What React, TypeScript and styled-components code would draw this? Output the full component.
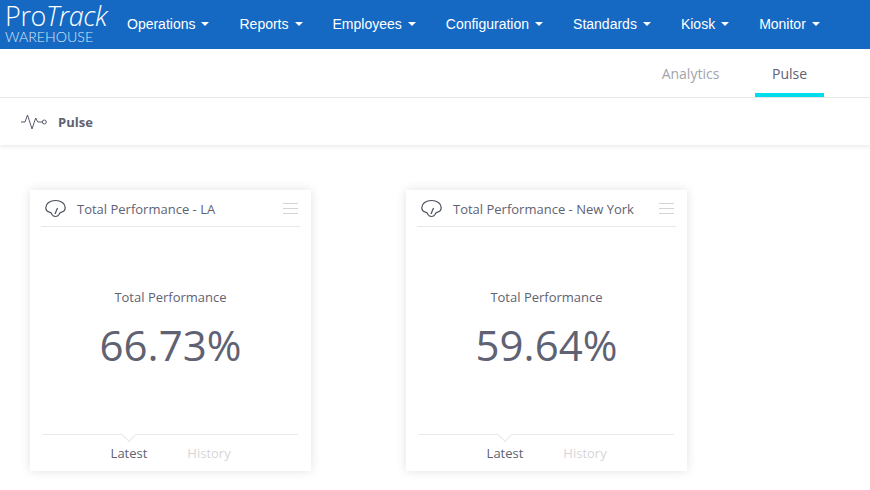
import React from 'react';
import styled, { createGlobalStyle } from 'styled-components';

const menuItems = ['Operations', 'Reports', 'Employees', 'Configuration', 'Standards', 'Kiosk', 'Monitor'];

const cards = [
  { title: 'Total Performance - LA', value: '66.73%' },
  { title: 'Total Performance - New York', value: '59.64%' },
];

function App() {
  return (
    <>
      <GlobalStyle />
      <Navbar>
        <Logo>
          <LogoMain>Pro<em>Track</em></LogoMain>
          <LogoSub>WAREHOUSE</LogoSub>
        </Logo>
        <Menu>
          {menuItems.map((item) => (
            <MenuItem key={item}>
              {item}
              <Caret />
            </MenuItem>
          ))}
        </Menu>
      </Navbar>

      <TabBar>
        <Tab>Analytics</Tab>
        <Tab $active>Pulse</Tab>
      </TabBar>

      <TitleBar>
        <svg width="28" height="16" viewBox="0 0 28 16" fill="none" stroke="#55596a" strokeWidth="1">
          <path d="M0 8H4L6.5 1L11 15L14.7 4L16.7 8H21" />
          <circle cx="23.3" cy="8" r="2" />
        </svg>
        <PageTitle>Pulse</PageTitle>
      </TitleBar>

      <CardGrid>
        {cards.map((card) => (
          <Card key={card.title}>
            <CardHeader>
              <svg width="22" height="19" viewBox="0 0 22 19" fill="none" stroke="#4a4d5c" strokeWidth="1.2">
                <path d="M4.5 13.2C2.2 12.6 0.8 11 0.8 8.5C0.8 4.5 5 1.5 10.5 1.5C16 1.5 20.2 4.5 20.2 8.5C20.2 11 18.8 12.6 16.5 13.2C15 13.4 14.6 14 14 15.5C13.2 17 12 17.5 10.5 17.5C9 17.5 7.8 17 7 15.5C6.4 14 6 13.4 4.5 13.2Z" />
                <path d="M10 15L12.5 9" />
              </svg>
              <CardTitle>{card.title}</CardTitle>
              <Burger>
                <span />
                <span />
                <span />
              </Burger>
            </CardHeader>
            <CardBody>
              <MetricLabel>Total Performance</MetricLabel>
              <MetricValue>{card.value}</MetricValue>
            </CardBody>
            <CardFooter>
              <FooterTab $active>Latest</FooterTab>
              <FooterTab>History</FooterTab>
            </CardFooter>
          </Card>
        ))}
      </CardGrid>
    </>
  );
}

export default App;

const GlobalStyle = createGlobalStyle`
  html, body {
    margin: 0;
    padding: 0;
    background: #fff;
  }

  body {
    min-height: 490px;
    font-family: "Open Sans", "Liberation Sans", sans-serif;
  }
`

const Navbar = styled.nav`
  display: flex;
  height: 49px;
  background-color: #1569c3;
  color: #fff;
`

const Logo = styled.div`
  display: flex;
  flex-direction: column;
  width: 112px;
  padding: 2px 0 0 5px;
  box-sizing: border-box;
  font-weight: 300;
`

const LogoMain = styled.div`
  font-family: "Open Sans", sans-serif;
  font-size: 27px;
  line-height: 27px;
  letter-spacing: -0.4px;
  white-space: nowrap;

  em {
    font-style: italic;
  }
`

const LogoSub = styled.div`
  margin-top: 1px;
  font-family: "Lato", sans-serif;
  font-size: 14.2px;
  line-height: 14px;
  color: #dbe8f6;
`

const Menu = styled.div`
  display: flex;
`

const MenuItem = styled.a`
  display: flex;
  align-items: center;
  height: 47px;
  padding: 0 15px 2px;
  font-family: "Liberation Sans", Arial, sans-serif;
  font-size: 14px;
  color: #fff;
  white-space: nowrap;
`

const Caret = styled.span`
  margin-left: 6px;
  margin-top: 1px;
  border-top: 4px solid #fff;
  border-left: 4px solid transparent;
  border-right: 4px solid transparent;
`

const TabBar = styled.div`
  display: flex;
  justify-content: flex-end;
  height: 48px;
  padding-right: 46px;
  border-bottom: 1px solid #e8e8e8;
`

const Tab = styled.a<{ $active?: boolean }>`
  display: flex;
  justify-content: center;
  align-items: center;
  box-sizing: border-box;
  width: ${(p) => (p.$active ? '69px' : '93px')};
  margin-left: ${(p) => (p.$active ? '18px' : '0')};
  height: 48px;
  padding-top: 4px;
  font-size: 14px;
  color: ${(p) => (p.$active ? '#5f6272' : '#a2a3ab')};
  border-bottom: 4px solid ${(p) => (p.$active ? '#00dcec' : 'transparent')};
`

const TitleBar = styled.div`
  display: flex;
  align-items: center;
  gap: 9px;
  height: 47px;
  padding-left: 21px;
  box-shadow: 0 2px 4px rgba(0, 0, 0, 0.08);
`

const PageTitle = styled.h1`
  margin: 0;
  font-size: 13px;
  font-weight: 700;
  color: #5f6272;
`

const CardGrid = styled.div`
  display: flex;
  gap: 95px;
  padding: 45px 0 0 30px;
`

const Card = styled.section`
  display: flex;
  flex-direction: column;
  width: 281px;
  height: 281px;
  box-shadow: 0 0 10px rgba(0, 0, 0, 0.12);
`

const CardHeader = styled.header`
  display: flex;
  align-items: center;
  height: 36px;
  margin: 0 11px;
  padding: 0 4px;
  border-bottom: 1px solid #e8e8e8;
`

const CardTitle = styled.span`
  flex: 1;
  margin: 1px 0 0 10px;
  font-size: 13px;
  color: #5f6272;
  white-space: nowrap;
`

const Burger = styled.div`
  display: flex;
  flex-direction: column;
  gap: 4px;
  width: 15px;
  margin-right: -2px;

  span {
    height: 1px;
    background-color: #d4d4d4;
  }
`

const CardBody = styled.div`
  flex: 1;
  display: flex;
  flex-direction: column;
  align-items: center;
  padding-top: 62px;
`

const MetricLabel = styled.div`
  font-size: 13px;
  line-height: 17px;
  color: #5f6272;
`

const MetricValue = styled.div`
  margin-top: 10px;
  font-size: 42px;
  line-height: 57px;
  color: #5f6272;
`

const CardFooter = styled.footer`
  position: relative;
  display: flex;
  height: 36px;
  margin: 0 13px;
  border-top: 1px solid #e8e8e8;

  &::before {
    content: "";
    position: absolute;
    top: -5px;
    left: 81px;
    width: 9px;
    height: 9px;
    background: #fff;
    border-right: 1px solid #e8e8e8;
    border-bottom: 1px solid #e8e8e8;
    transform: rotate(45deg);
  }
`

const FooterTab = styled.a<{ $active?: boolean }>`
  display: flex;
  justify-content: center;
  width: 80px;
  margin-left: ${(p) => (p.$active ? '46px' : '0')};
  padding-top: 10px;
  font-size: 13px;
  line-height: 17px;
  color: ${(p) => (p.$active ? '#5f6272' : '#d6d6d8')};
`
